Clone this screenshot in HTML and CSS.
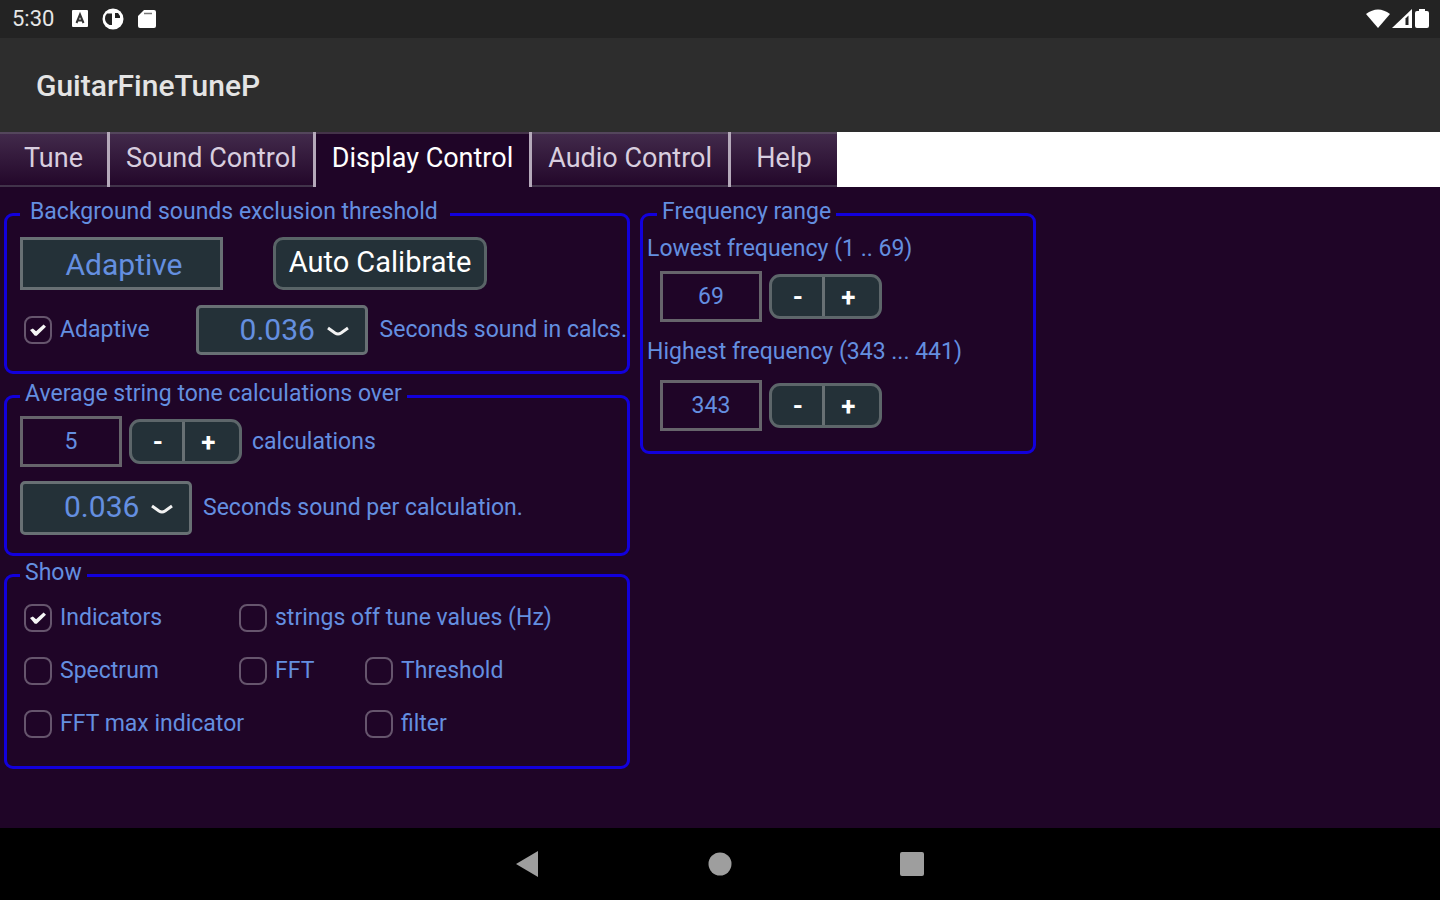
FILE: index.html
```html
<!DOCTYPE html>
<html lang="en">
<head>
<meta charset="utf-8">
<title>GuitarFineTuneP</title>
<link rel="stylesheet" href="styles.css">
</head>
<body>
<div class="status-bar">
  <span class="clock">5:30</span>
  <svg class="status-icon" width="16" height="18" viewBox="0 0 16 18" aria-hidden="true"><rect width="16" height="17" rx="1" fill="#fff"/><path d="M4.500 13 8 4.500l3.500 8.500M6 10.500h4" fill="none" stroke="#333" stroke-width="2"/></svg>
  <svg class="status-icon" width="22" height="22" viewBox="0 0 22 22" aria-hidden="true"><circle cx="11" cy="11" r="10.500" fill="#fff"/><path d="M5 5.500h5V17H7.500Q3 14.500 3 10.500 3 7.500 5 5.500zM13 5h3l2 3v2h-5z" fill="#232323"/></svg>
  <svg class="status-icon" width="18" height="20" viewBox="0 0 18 20" aria-hidden="true"><path d="M6 1h10q2 0 2 2v14q0 2-2 2H2q-2 0-2-2V7z" fill="#fff"/><path d="M6 4.500h8" stroke="#777" stroke-width="1.500"/></svg>
  <span class="status-right">
    <svg width="24" height="20" viewBox="0 0 24 20" aria-hidden="true"><path d="M0 5q12-9 24 0L12 19z" fill="#fff"/></svg>
    <svg width="21" height="20" viewBox="0 0 21 20" aria-hidden="true"><path d="M0 19 20 0v19z" fill="#fff"/><path d="M13.500 9.500 16.500 6.500V16h-3z" fill="#232323"/></svg>
    <svg width="14" height="20" viewBox="0 0 14 20" aria-hidden="true"><path d="M4 0h6v2h2q2 0 2 2v13q0 2-2 2H2q-2 0-2-2V4q0-2 2-2h2z" fill="#fff"/></svg>
  </span>
</div>
<header class="app-bar"><h1 class="app-title">GuitarFineTuneP</h1></header>
<nav class="tabs" role="tablist">
  <button class="tab" role="tab">Tune</button>
  <button class="tab" role="tab">Sound Control</button>
  <button class="tab tab-active" role="tab" aria-selected="true">Display Control</button>
  <button class="tab" role="tab">Audio Control</button>
  <button class="tab" role="tab">Help</button>
</nav>
<main class="content">
  <div class="column">
    <fieldset class="group group-threshold">
      <legend>Background sounds exclusion threshold</legend>
      <div class="row">
        <output class="readout">Adaptive</output>
        <button class="action">Auto Calibrate</button>
      </div>
      <div class="row row-adaptive">
        <label class="check"><input type="checkbox" checked>Adaptive</label>
        <span class="select-wrap">
          <select id="calc-seconds"><option>0.036</option></select>
          <svg class="chevron" width="24" height="12" viewBox="0 0 24 12" aria-hidden="true"><path d="M2 2 9 7q3 2 6 0l7-5" fill="none" stroke="#f2f2f2" stroke-width="3"/></svg>
        </span>
        <label for="calc-seconds">Seconds sound in calcs.</label>
      </div>
    </fieldset>
    <fieldset class="group group-average">
      <legend>Average string tone calculations over</legend>
      <div class="row row-count">
        <input class="number" id="calc-count" type="text" value="5">
        <span class="stepper"><button aria-label="Decrease calculations">-</button><button aria-label="Increase calculations">+</button></span>
        <label for="calc-count">calculations</label>
      </div>
      <div class="row row-seconds">
        <span class="select-wrap">
          <select id="per-seconds"><option>0.036</option></select>
          <svg class="chevron" width="24" height="12" viewBox="0 0 24 12" aria-hidden="true"><path d="M2 2 9 7q3 2 6 0l7-5" fill="none" stroke="#f2f2f2" stroke-width="3"/></svg>
        </span>
        <label for="per-seconds">Seconds sound per calculation.</label>
      </div>
    </fieldset>
    <fieldset class="group group-show">
      <legend>Show</legend>
      <div class="show-grid">
        <label class="check"><input type="checkbox" checked>Indicators</label>
        <label class="check wide-end"><input type="checkbox">strings off tune values (Hz)</label>
        <label class="check"><input type="checkbox">Spectrum</label>
        <label class="check"><input type="checkbox">FFT</label>
        <label class="check"><input type="checkbox">Threshold</label>
        <label class="check wide-start"><input type="checkbox">FFT max indicator</label>
        <label class="check"><input type="checkbox">filter</label>
      </div>
    </fieldset>
  </div>
  <div class="column">
    <fieldset class="group group-frequency">
      <legend>Frequency range</legend>
      <label class="field-label" for="lowest">Lowest frequency (1 .. 69)</label>
      <div class="row row-count row-inset">
        <input class="number" id="lowest" type="text" value="69">
        <span class="stepper"><button aria-label="Decrease lowest frequency">-</button><button aria-label="Increase lowest frequency">+</button></span>
      </div>
      <label class="field-label field-label-high" for="highest">Highest frequency (343 ... 441)</label>
      <div class="row row-count row-inset">
        <input class="number" id="highest" type="text" value="343">
        <span class="stepper"><button aria-label="Decrease highest frequency">-</button><button aria-label="Increase highest frequency">+</button></span>
      </div>
    </fieldset>
  </div>
</main>
<footer class="nav-bar">
  <button aria-label="Back"><svg width="24" height="26" viewBox="0 0 24 26"><path d="M0 13 22 0v26z" fill="#9e9e9e"/></svg></button>
  <button aria-label="Home"><svg width="24" height="24" viewBox="0 0 24 24"><circle cx="12" cy="12" r="11.500" fill="#9e9e9e"/></svg></button>
  <button aria-label="Recent apps"><svg width="24" height="24" viewBox="0 0 24 24"><rect width="24" height="24" rx="2" fill="#9e9e9e"/></svg></button>
</footer>
</body>
</html>
```
FILE: styles.css
```css
* { box-sizing: border-box; }

body {
  margin: 0;
  min-height: 100vh;
  display: flex;
  flex-direction: column;
  background: #1f0527;
  color: #648fe0;
  font: 23px/24px Roboto, sans-serif;
}

button, input, select { font: inherit; color: inherit; margin: 0; }
svg { display: block; }

.status-bar {
  display: flex;
  align-items: center;
  height: 38px;
  padding: 0 11px 0 12px;
  background: #232323;
  color: #e6e6e6;
}
.clock { font-size: 22px; }
.status-icon { margin-left: 14px; }
.clock + .status-icon { margin-left: 18px; }
.status-right { display: flex; gap: 2px; margin-left: auto; }

.app-bar {
  display: flex;
  align-items: center;
  height: 94px;
  padding: 2px 36px 0;
  background: #2d2d2d;
}
.app-title { margin: 0; font-size: 30px; font-weight: 500; line-height: 36px; color: #e4e4e4; }

.tabs { display: flex; height: 55px; background: #fff; }
.tab {
  min-width: 110px;
  padding: 0 16px 3px;
  border: 0 solid #b5a9ba;
  border-right-width: 3px;
  background: linear-gradient(#432b4c, #220629);
  box-shadow: inset 0 2px #54465c, inset 0 -2px #41334a;
  color: #d8cedf;
  font-size: 27px;
  line-height: 36px;
  white-space: nowrap;
}
.tab:last-child { min-width: 106px; border-right-width: 0; }
.tab-active { background: #1f0527; box-shadow: inset 0 2px #443349; color: #fff; }

.content {
  flex: 1;
  display: grid;
  grid-template-columns: 626fr 396fr 390fr;
  gap: 10px;
  align-items: start;
  padding: 13px 4px;
}
.column { min-width: 0; }

.group { min-width: 0; margin: 0; border: 3px solid #1200dc; border-radius: 9px; }
.group legend { padding: 0 5px 5px; }
.group-threshold { padding: 8px 0 16px 13px; }
.group-threshold legend { padding: 0 12px 5px 10px; }
.group-average { margin-top: 8px; padding: 5px 0 18px 13px; }
.group-show { margin-top: 5px; padding: 14px 0 28px 17px; }
.group-show legend { margin-left: -4px; }
.group-frequency { padding: 8px 0 20px 4px; }
.group-frequency legend { margin-left: 10px; }

.row { display: flex; align-items: center; white-space: nowrap; }

.readout {
  width: 203px;
  padding: 7px 0 4px 5px;
  border: 3px solid #687074;
  background: #243138;
  font-size: 30px;
  line-height: 36px;
  text-align: center;
}
.action {
  width: 214px;
  height: 53px;
  margin-left: 50px;
  padding: 0 0 3px;
  border: 3px solid #596467;
  border-radius: 10px;
  background: #243138;
  color: #fff;
  font-size: 29px;
}

.row-adaptive { gap: 12px; margin-top: 15px; padding-left: 4px; }
.row-adaptive .check { width: 160px; }

.check { display: flex; align-items: center; gap: 8px; }
.check input {
  appearance: none;
  display: grid;
  place-items: center;
  width: 28px;
  height: 28px;
  border: 2px solid #66556d;
  border-radius: 8px;
}
.check input:checked::after {
  content: "";
  width: 16px;
  height: 12px;
  background: #f5f5f5;
  clip-path: polygon(0 50%, 18% 38%, 38% 60%, 85% 5%, 100% 22%, 42% 98%, 30% 98%);
}

.select-wrap { position: relative; }
.select-wrap select {
  appearance: none;
  display: block;
  width: 172px;
  height: 50px;
  padding: 0 0 1px 41px;
  border: 3px solid #687074;
  border-radius: 5px;
  background: #243138;
  font-size: 30px;
}
.chevron { position: absolute; top: 50%; right: 18px; margin-top: -4px; pointer-events: none; }

.number {
  width: 102px;
  height: 51px;
  padding: 0;
  border: 3px solid #66646b;
  background: transparent;
  text-align: center;
}
.stepper {
  display: flex;
  width: 113px;
  height: 45px;
  overflow: hidden;
  border: 3px solid #5d666a;
  border-radius: 11px;
  background: #243138;
}
.stepper button { flex: 1; padding: 0; border: 0; background: none; color: #fff; font-size: 26px; font-weight: 700; }
.stepper button:first-child { border-right: 3px solid #687074; padding-left: 2px; }
.stepper button:last-child { padding-right: 7px; }
.row-count { gap: 7px; }
.row-count label { padding-left: 3px; }
.row-seconds { gap: 11px; margin-top: 14px; }
.row-seconds select { height: 54px; padding-bottom: 3px; }

.show-grid {
  display: grid;
  grid-template-columns: 215px 126px 1fr;
  row-gap: 25px;
  white-space: nowrap;
}
.wide-end { grid-column: 2 / 4; }
.wide-start { grid-column: 1 / 3; }

.field-label { display: block; margin-bottom: 10px; }
.field-label-high { margin: 18px 0 16px; }
.row-inset { padding-left: 13px; }

.nav-bar {
  display: flex;
  justify-content: center;
  gap: 168px;
  height: 72px;
  background: #000;
}
.nav-bar button { padding: 0; border: 0; background: none; }
```
